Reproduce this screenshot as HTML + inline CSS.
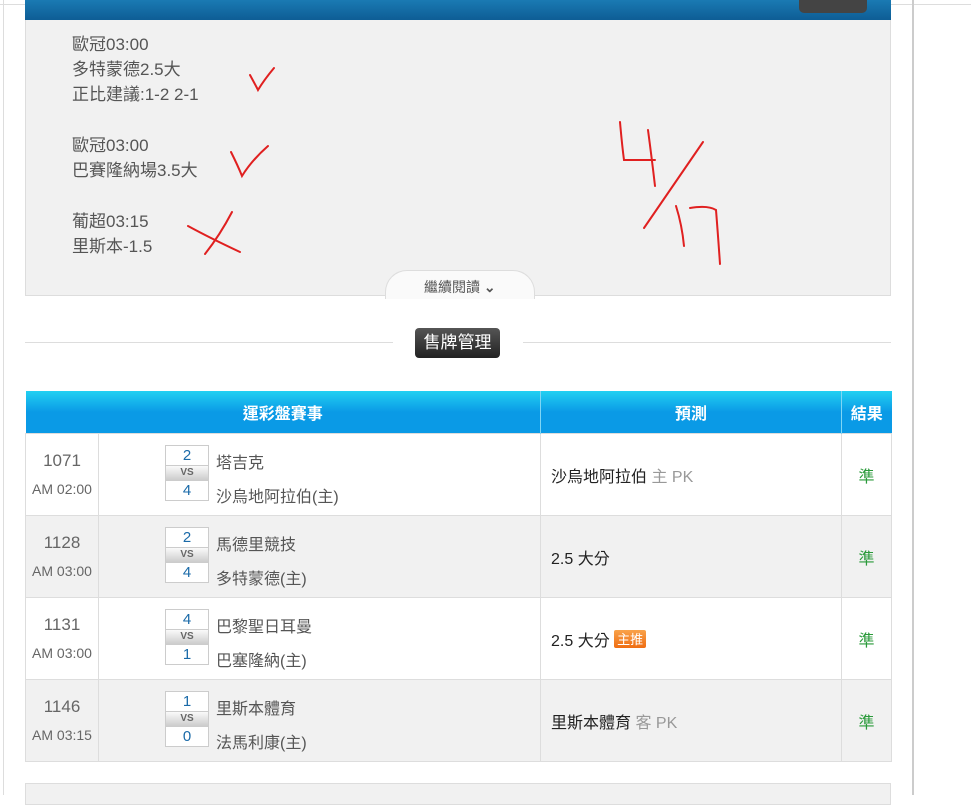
<!DOCTYPE html>
<html><head><meta charset="utf-8"><style>
body{margin:0;width:971px;height:795px;overflow:hidden;background:#fff;font-family:"Liberation Sans","Noto Sans CJK TC",sans-serif;position:relative}
.abs{position:absolute}
.panel{left:25px;top:20px;width:864px;height:275px;background:#f1f1f1;border:1px solid #ddd;border-top:none}
.bar{left:25px;top:0;width:866px;height:20px;background:linear-gradient(#1a7ab3,#0e5d95)}
.txt{font-size:17px;color:#555;line-height:25px}
table{border-collapse:collapse;position:absolute;left:25px;top:391px;width:866px;table-layout:fixed}
th{height:42px;color:#fff;font-size:16px;font-weight:bold;background:linear-gradient(#22d0f2,#0a9ae6 50%,#0a9ae6);border-right:1px solid #7fd6f5;padding:0}
td{border:1px solid #ddd;height:81px;font-size:16px;padding:0}
tr.g td{background:#f1f1f1}
.num{text-align:center;color:#666;font-size:17px;line-height:28px}
.num small{font-size:14px;display:block}
.sb{position:absolute;left:66px;width:42px;border:1px solid #ccc;background:#fff}
.sb div{height:19px;text-align:center;color:#1a6aa8;font-size:15px;line-height:19px}
.sb .vs{height:14px;line-height:14px;font-size:10px;font-weight:bold;color:#666;background:linear-gradient(#fafafa,#ccc);border-top:1px solid #ccc;border-bottom:1px solid #ccc}
.tm{position:absolute;left:117px;font-size:16px;color:#555}
.pred{padding-left:10px;color:#222}
.pred span{color:#999}
.res{text-align:center;color:#2a9a3a}
.tag{display:inline-block;background:linear-gradient(#f9a24a,#ef6d12);color:#fff;font-size:13px;line-height:16px;padding:1px 3px;border-radius:2px;vertical-align:2px;font-family:"Noto Sans CJK TC",sans-serif}
</style></head><body>
<div class="abs" style="left:0;top:0;width:971px;height:4px;background:#fff;border-bottom:1px solid #ddd"></div>
<div class="abs" style="left:3px;top:0;width:1px;height:795px;background:#ddd"></div>
<div class="abs" style="left:912px;top:0;width:2px;height:795px;background:#ccc"></div>
<div class="abs bar"></div>
<div class="abs" style="left:799px;top:0;width:68px;height:13px;background:#444;border-radius:0 0 5px 5px"></div>
<div class="abs panel"></div>
<div class="abs txt" style="left:72px;top:32px">歐冠03:00<br>多特蒙德2.5大<br>正比建議:1-2 2-1</div>
<div class="abs txt" style="left:72px;top:133px">歐冠03:00<br>巴賽隆納場3.5大</div>
<div class="abs txt" style="left:72px;top:209px">葡超03:15<br>里斯本-1.5</div>
<svg class="abs" style="left:0;top:0" width="971" height="300" fill="none" stroke="#e02020" stroke-width="2" stroke-linecap="round">
<path d="M250 75 Q256 86 258 90 Q264 80 274 68"/>
<path d="M231 152 Q238 166 242 176 Q252 160 268 146"/>
<path d="M188 226 Q210 238 240 252 M232 212 Q220 235 205 254"/>
<path d="M620 122 Q622 145 624 160 L655 160 M648 130 Q652 160 655 186"/>
<path d="M703 142 Q670 190 644 228"/>
<path d="M676 206 Q682 225 684 246 M690 208 Q708 205 716 210 Q718 235 720 264"/>
</svg>
<div class="abs" style="left:385px;top:270px;width:148px;height:28px;background:#fafafa;border:1px solid #ddd;border-bottom:none;border-radius:22px 22px 0 0"></div>
<div class="abs" style="left:424px;top:277px;font-size:14px;color:#555">繼續閱讀 <b>⌄</b></div>
<div class="abs" style="left:25px;top:342px;width:368px;height:1px;background:#ddd"></div>
<div class="abs" style="left:523px;top:342px;width:368px;height:1px;background:#ddd"></div>
<div class="abs" style="left:415px;top:328px;width:85px;height:30px;background:linear-gradient(#555,#222);border-radius:4px;color:#fff;font-size:17px;text-align:center;line-height:30px">售牌管理</div>
<table>
<colgroup><col style="width:73px"><col style="width:442px"><col style="width:301px"><col style="width:50px"></colgroup>
<tr><th colspan="2">運彩盤賽事</th><th>預測</th><th style="border-right:none">結果</th></tr>
<tr><td class="num">1071<small>AM 02:00</small></td><td style="position:relative"><div class="sb" style="top:11px"><div>2</div><div class="vs">VS</div><div>4</div></div><div class="tm" style="top:15px">塔吉克</div><div class="tm" style="top:49px">沙烏地阿拉伯(主)</div></td><td class="pred">沙烏地阿拉伯 <span>主 PK</span></td><td class="res">準</td></tr>
<tr class="g"><td class="num">1128<small>AM 03:00</small></td><td style="position:relative"><div class="sb" style="top:11px"><div>2</div><div class="vs">VS</div><div>4</div></div><div class="tm" style="top:15px">馬德里競技</div><div class="tm" style="top:49px">多特蒙德(主)</div></td><td class="pred">2.5 大分</td><td class="res">準</td></tr>
<tr><td class="num">1131<small>AM 03:00</small></td><td style="position:relative"><div class="sb" style="top:11px"><div>4</div><div class="vs">VS</div><div>1</div></div><div class="tm" style="top:15px">巴黎聖日耳曼</div><div class="tm" style="top:49px">巴塞隆納(主)</div></td><td class="pred">2.5 大分 <span class="tag" style="color:#fff">主推</span></td><td class="res">準</td></tr>
<tr class="g"><td class="num">1146<small>AM 03:15</small></td><td style="position:relative"><div class="sb" style="top:11px"><div>1</div><div class="vs">VS</div><div>0</div></div><div class="tm" style="top:15px">里斯本體育</div><div class="tm" style="top:49px">法馬利康(主)</div></td><td class="pred">里斯本體育 <span>客 PK</span></td><td class="res">準</td></tr>
</table>
<div class="abs" style="left:25px;top:783px;width:864px;height:20px;background:#f1f1f1;border:1px solid #ddd"></div>
</body></html>
